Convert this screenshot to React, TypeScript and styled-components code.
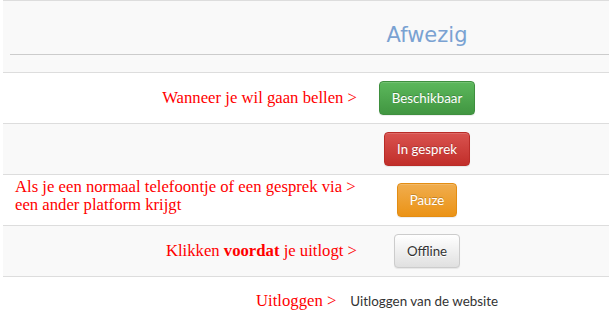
import styled, { createGlobalStyle } from "styled-components";

const GlobalStyle = createGlobalStyle`
  body {
    margin: 0;
    background: #fff;
    font-family: "Lato", sans-serif;
  }
`;

type Variant = "success" | "danger" | "warning" | "default";

interface StatusRow {
  hint?: React.ReactNode;
  align?: "left" | "right";
  label: string;
  variant: Variant;
}

const rows: StatusRow[] = [
  { hint: "Wanneer je wil gaan bellen >", label: "Beschikbaar", variant: "success" },
  { label: "In gesprek", variant: "danger" },
  {
    hint: "Als je een normaal telefoontje of een gesprek via > een ander platform krijgt",
    align: "left",
    label: "Pauze",
    variant: "warning",
  },
  {
    hint: (
      <>
        Klikken <b>voordat</b> je uitlogt &gt;
      </>
    ),
    label: "Offline",
    variant: "default",
  },
];

function App() {
  return (
    <>
      <GlobalStyle />
      <Table>
        <Header>
          <HeaderBar>
            <span />
            <Title>Afwezig</Title>
          </HeaderBar>
        </Header>
        {rows.map((row, i) => (
          <Row key={row.label} $striped={i % 2 === 1}>
            <Hint $align={row.align ?? "right"}>{row.hint}</Hint>
            <ButtonCell>
              <Button $variant={row.variant}>{row.label}</Button>
            </ButtonCell>
          </Row>
        ))}
      </Table>
      <Logout>
        <RedText>Uitloggen &gt;</RedText>
        <LogoutLabel>Uitloggen van de website</LogoutLabel>
      </Logout>
    </>
  );
}

export default App;

const Table = styled.div`
  margin-left: 3px;
  border-top: 1px solid #ddd;
`;

const Header = styled.div`
  background: #f9f9f9;
  padding: 0 0 17px 7px;
  border-bottom: 1px solid #ddd;
`;

const HeaderBar = styled.div`
  display: grid;
  grid-template-columns: 357px 120px 1fr;
  padding: 22px 0 7px;
  border-bottom: 1px solid #ccc;
`;

const Title = styled.h3`
  margin: 0;
  text-align: center;
  font-family: "DejaVu Sans", sans-serif;
  font-weight: normal;
  font-size: 21px;
  line-height: 24px;
  color: #7aa2d2;
`;

const Row = styled.div<{ $striped: boolean }>`
  display: grid;
  grid-template-columns: 364px 120px 1fr;
  background: ${(p) => (p.$striped ? "#f9f9f9" : "#fff")};
  border-bottom: 1px solid #ddd;
`;

const RedText = styled.span`
  font-family: "Liberation Serif", serif;
  font-size: 16.7px;
  color: #ff0000;
`;

const Hint = styled(RedText)<{ $align: "left" | "right" }>`
  display: block;
  text-align: ${(p) => p.$align};
  align-self: ${(p) => (p.$align === "left" ? "start" : "center")};
  padding: ${(p) => (p.$align === "left" ? "3px 10px 0 12px" : "0 10px")};
  line-height: ${(p) => (p.$align === "left" ? "18.4px" : "normal")};
`;

const ButtonCell = styled.div`
  padding: 8px;
  display: flex;
  justify-content: center;
`;

const palette: Record<Variant, { from: string; to: string; border: string; color: string; shadow: string }> = {
  success: { from: "#5cb85c", to: "#419641", border: "#3e8f3e", color: "#fff", shadow: "0 -1px 0 rgba(0,0,0,.2)" },
  danger: { from: "#d9534f", to: "#c12e2a", border: "#b92c28", color: "#fff", shadow: "0 -1px 0 rgba(0,0,0,.2)" },
  warning: { from: "#f0ad4e", to: "#eb9316", border: "#e38d13", color: "#fff", shadow: "0 -1px 0 rgba(0,0,0,.2)" },
  default: { from: "#fff", to: "#e0e0e0", border: "#ccc", color: "#333", shadow: "0 1px 0 #fff" },
};

const Button = styled.button<{ $variant: Variant }>`
  font-family: "Lato", sans-serif;
  font-size: 13.3px;
  line-height: 20px;
  padding: 6px 12px;
  border-radius: 4px;
  border: 1px solid ${(p) => palette[p.$variant].border};
  color: ${(p) => palette[p.$variant].color};
  text-shadow: ${(p) => palette[p.$variant].shadow};
  background-image: linear-gradient(
    to bottom,
    ${(p) => palette[p.$variant].from} 0,
    ${(p) => palette[p.$variant].to} 100%
  );
  box-shadow: inset 0 1px 0 rgba(255, 255, 255, 0.15), 0 1px 1px rgba(0, 0, 0, 0.075);
  cursor: pointer;
`;

const Logout = styled.div`
  display: flex;
  align-items: baseline;
  gap: 14px;
  padding: 14px 0 0 256px;
  line-height: 20px;
`;

const LogoutLabel = styled.span`
  font-family: "Lato", sans-serif;
  font-size: 13.4px;
  color: #333;
`;
